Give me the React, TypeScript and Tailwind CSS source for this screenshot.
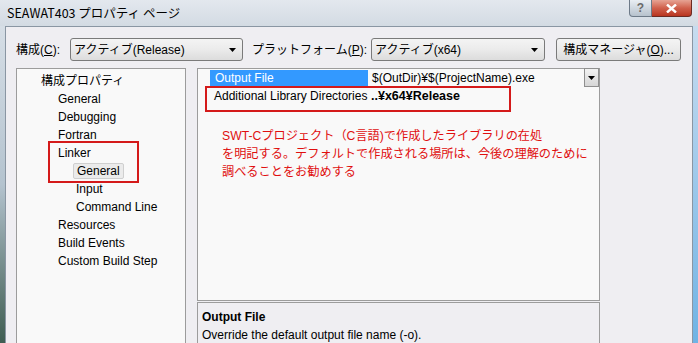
import React from "react";

// Tree rows of the property page
const treeItems: { label: string; indent: number; selected?: boolean }[] = [
  { label: "構成プロパティ", indent: 24 },
  { label: "General", indent: 41 },
  { label: "Debugging", indent: 41 },
  { label: "Fortran", indent: 41 },
  { label: "Linker", indent: 41 },
  { label: "General", indent: 56, selected: true },
  { label: "Input", indent: 59 },
  { label: "Command Line", indent: 59 },
  { label: "Resources", indent: 41 },
  { label: "Build Events", indent: 41 },
  { label: "Custom Build Step", indent: 41 },
];

const font = "font-['Liberation_Sans','Noto_Sans_CJK_JP',sans-serif]";

const Arrow = () => (
  <svg width="7" height="4" viewBox="0 0 7 4">
    <path d="M0 0h7L3.5 4z" fill="#000" />
  </svg>
);

const Combo = ({ text, width }: { text: string; width: string }) => (
  <div
    className={`${width} h-[23px] flex items-center justify-between pl-[3px] pr-[6px] rounded-[3px] border border-[#7a7a7a] bg-linear-to-b from-[#f4f4f4] via-[#ebebeb] to-[#dcdcdc] text-[12px] text-black whitespace-nowrap`}
  >
    <span>{text}</span>
    <Arrow />
  </div>
);

const App: React.FC = () => {
  return (
    <div
      className={`w-[698px] h-[343px] overflow-hidden flex flex-col bg-[#c9d4de] ${font}`}
    >
      {/* Title bar */}
      <div className="h-[26px] shrink-0 flex items-start justify-between bg-linear-to-b from-[#e3e8ee] to-[#d3dbe3]">
        <span className="pl-[7px] pt-[4px] text-[12.5px] text-black font-['Noto_Sans_CJK_JP',sans-serif] leading-[18px]">
          SEAWAT403 プロパティ ページ
        </span>
        <div className="flex mr-[6px]">
          <div className="w-[23px] h-[17px] flex items-center justify-center rounded-bl-[4px] border border-[#6d7a88] border-t-0 bg-linear-to-b from-[#e9eef3] to-[#b7c2cd] text-[12px] font-bold text-[#6a6a6a] leading-none">
            ?
          </div>
          <div className="w-[40px] h-[17px] flex items-center justify-center rounded-br-[4px] border border-[#6b2a22] border-t-0 border-l-0 bg-linear-to-b from-[#e6a394] via-[#d0604c] to-[#b8341f]">
            <svg width="11" height="9" viewBox="0 0 11 9">
              <path
                d="M1 0.5L10 8.5M10 0.5L1 8.5"
                stroke="#fff"
                strokeWidth="2.4"
              />
            </svg>
          </div>
        </div>
      </div>

      <div className="flex flex-1 min-h-0">
        {/* left window frame */}
        <div className="w-[5px] shrink-0 bg-linear-to-b from-[#d6dee6] via-[#b4c3cf] to-[#3f5d52]" />

        {/* Client area */}
        <div className="flex-1 min-w-0 flex flex-col bg-[#efeef2] border-l border-t border-r border-[#8a96a3]">
          {/* Configuration row */}
          <div className="flex items-center h-[23px] mt-[11px] pl-[10px] text-[12px] text-black shrink-0 whitespace-nowrap">
            <span className="w-[54px]">
              構成(<span className="underline">C</span>):
            </span>
            <Combo text="アクティブ(Release)" width="w-[173px]" />
            <span className="ml-[9px] w-[119px]">
              プラットフォーム(<span className="underline">P</span>):
            </span>
            <Combo text="アクティブ(x64)" width="w-[174px]" />
            <div className="ml-[11px] w-[125px] h-[23px] flex items-center justify-center rounded-[3px] border border-[#7a7a7a] bg-linear-to-b from-[#f4f4f4] via-[#ebebeb] to-[#dcdcdc]">
              構成マネージャ(<span className="underline">O</span>)...
            </div>
          </div>

          <div className="flex flex-1 min-h-0 mt-[7px] pl-[10px]">
            {/* Tree */}
            <div className="relative w-[170px] shrink-0 bg-[#f9f9f9] border-l border-t border-r border-[#9c9c9c] pt-[3px] text-[12px] text-black">
              {treeItems.map((item, i) => (
                <div
                  key={i}
                  className="h-[18px] flex items-center"
                  style={{ paddingLeft: item.indent }}
                >
                  {item.selected ? (
                    <span className="px-[3px] h-[16px] flex items-center rounded-[2px] bg-[#ebebeb] border border-[#cfcfcf]">
                      {item.label}
                    </span>
                  ) : (
                    <span>{item.label}</span>
                  )}
                </div>
              ))}
              {/* annotation box */}
              <div className="absolute left-[31px] top-[72px] w-[91px] h-[42px] border-2 border-[#d41a1a]" />
            </div>

            {/* Property grid + description */}
            <div className="ml-[11px] w-[403px] shrink-0 flex flex-col">
              <div className="relative h-[233px] shrink-0 bg-[#f9f9f9] border border-[#9c9c9c] text-[12px]">
                <div className="flex h-[18px] items-center">
                  <div className="w-[12px]" />
                  <div className="w-[158px] h-[16px] flex items-center pl-[5px] bg-[#3399ff] text-white">
                    Output File
                  </div>
                  <div className="flex-1 flex items-center justify-between pl-[4px] text-black">
                    <span>$(OutDir)¥$(ProjectName).exe</span>
                    <div className="w-[15px] h-[19px] self-start -mt-[1px] flex items-center justify-center border border-[#8f8f8f] bg-linear-to-b from-[#f2f2f2] to-[#d6d6d6]">
                      <Arrow />
                    </div>
                  </div>
                </div>
                <div className="flex h-[18px] items-center text-black">
                  <div className="w-[12px]" />
                  <div className="w-[158px] pl-[4px]">
                    Additional Library Directories
                  </div>
                  <div className="pl-[3px] font-bold text-[12.5px]">
                    ..¥x64¥Release
                  </div>
                </div>
                {/* annotation box */}
                <div className="absolute left-[7px] top-[17px] w-[306px] h-[26px] border-2 border-[#d41a1a]" />

                <p className="mt-[22px] pl-[24px] text-[12.2px] leading-[18px] text-[#e00f0f] whitespace-nowrap">
                  SWT-Cプロジェクト（C言語)で作成したライブラリの在処
                  <br />
                  を明記する。デフォルトで作成される場所は、今後の理解のために
                  <br />
                  調べることをお勧めする
                </p>
              </div>
              <div className="flex-1 mt-[1px] border-l border-t border-r border-[#9c9c9c] bg-[#efeef2] pl-[4px] pt-[5px] text-[12px] text-black">
                <div className="font-bold h-[18px] flex items-center">
                  Output File
                </div>
                <div className="h-[18px] flex items-center">
                  Override the default output file name (-o).
                </div>
              </div>
            </div>
          </div>
        </div>

        {/* right window frame */}
        <div className="w-[5px] shrink-0 bg-linear-to-b from-[#c7dcef] to-[#6fb3e4]" />
      </div>
    </div>
  );
};

export default App;
